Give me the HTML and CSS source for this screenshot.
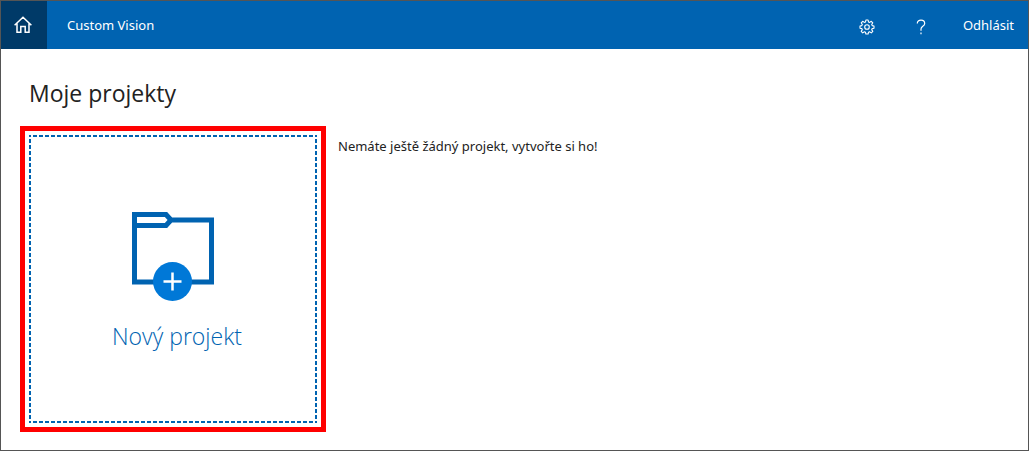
FILE: index.html
```html
<!DOCTYPE html>
<html lang="cs">
<head>
<meta charset="utf-8">
<meta name="viewport" content="width=device-width, initial-scale=1">
<title>Custom Vision</title>
<link rel="stylesheet" href="styles.css">
</head>
<body>
<div class="app">
  <header class="topbar">
    <a class="home" href="#" aria-label="Custom Vision">
      <svg width="18" height="18" viewBox="0 0 18 18" fill="none" stroke="currentColor" stroke-width="1.5"><path d="M.6 9.200 9 1.200l8.400 8M3 7.500V16.200h3.800V10.500h4.400v5.700H15V7.500"/></svg>
    </a>
    <a class="brand" href="#">Custom Vision</a>
    <nav class="actions">
      <div class="icons">
        <button class="icon-button" type="button" aria-label="settings">
          <svg width="16" height="16" viewBox="0 0 16 16" fill="none" stroke="currentColor" stroke-width="1.100" stroke-linejoin="round"><path d="M6.900 1h2.200l.4 1.900 1.100.5 1.700-1.100 1.500 1.500-1.100 1.700.5 1.100 1.800.4v2.200l-1.800.4-.5 1.100 1.100 1.700-1.500 1.500-1.700-1.100-1.100.5L9.100 15H6.900l-.4-1.700-1.100-.5-1.700 1.100-1.500-1.500 1.100-1.700-.5-1.100L1 9.200V7l1.800-.4.5-1.100-1.100-1.700 1.500-1.500 1.700 1.100 1.100-.5z"/><circle cx="8" cy="8" r="2.300"/></svg>
        </button>
        <button class="icon-button" type="button" aria-label="help">
          <svg width="16" height="16" viewBox="0 0 16 16" fill="none" stroke="currentColor" stroke-width="1.200"><path d="M4.300 4.500C4.300 2.300 5.800 1.200 8 1.200s3.700 1.200 3.700 3.200C11.700 7.200 8 7.400 8 10v1.800M8 13.600v1.600"/></svg>
        </button>
      </div>
      <a class="signout" href="#">Odhlásit</a>
    </nav>
  </header>
  <main class="content">
    <h1 class="title">Moje projekty</h1>
    <div class="projects">
      <div class="highlight">
        <button class="new-project" type="button">
          <svg width="82" height="90" viewBox="0 0 82 90" aria-hidden="true">
            <path d="M2.500 2.500H34L39 8H79.500V70H2.500V2.500M2.500 13.500H34L39 8" fill="none" stroke="#0063b1" stroke-width="5"/>
            <path d="M0 0h5v5H0z" fill="#0063b1"/>
            <circle cx="40.500" cy="69.500" r="19.500" fill="#0078d7"/>
            <path d="M31.500 69.500h18M40.500 60.500v18" stroke="#fff" stroke-width="2.500"/>
          </svg>
          <span class="new-label">Nový projekt</span>
        </button>
      </div>
      <p class="empty">Nemáte ještě žádný projekt, vytvořte si ho!</p>
    </div>
  </main>
</div>
</body>
</html>
```
FILE: styles.css
```css
* {
  box-sizing: border-box;
}

body {
  margin: 0;
  background: #fff;
  color: #222;
  font: 13px/20px "Noto Sans", "Open Sans", sans-serif;
}

.app {
  min-height: 100vh;
  border: 1px solid #555;
}

.topbar {
  display: flex;
  align-items: stretch;
  height: 48px;
  background: #0063b1;
  color: #fff;
}

.topbar a {
  color: inherit;
  text-decoration: none;
}

.home {
  display: flex;
  align-items: center;
  justify-content: center;
  width: 46px;
  padding-right: 2px;
  background: #003a68;
}

.brand {
  padding: 14px 20px;
}

.actions {
  display: flex;
  align-items: center;
  gap: 34px;
  margin-left: auto;
  padding-right: 14px;
}

.icons {
  display: flex;
  gap: 38px;
}

.icon-button {
  display: flex;
  padding: 4px 0 0;
  border: 0;
  background: none;
  color: inherit;
}

.content {
  padding: 28px 19px 18px;
}

.title {
  margin: 0 0 17px;
  padding-left: 9px;
  font: 400 23px/32px "Open Sans", "Noto Sans", sans-serif;
}

.projects {
  display: flex;
  align-items: flex-start;
  gap: 12px;
}

.highlight {
  padding: 4px;
  border: 5px solid #f00;
}

/* Dashed frame: 4px dashes with 2px gaps, a dash at every corner */
.new-project {
  display: flex;
  flex-direction: column;
  align-items: center;
  justify-content: center;
  gap: 18px;
  width: 288px;
  height: 288px;
  padding: 6px 0 0;
  border: 0;
  background:
    repeating-linear-gradient(90deg, #0063b1 0 2px, transparent 2px 4px, #0063b1 4px 6px) top / 100% 2px no-repeat,
    repeating-linear-gradient(90deg, #0063b1 0 2px, transparent 2px 4px, #0063b1 4px 6px) bottom / 100% 2px no-repeat,
    repeating-linear-gradient(#0063b1 0 2px, transparent 2px 4px, #0063b1 4px 6px) left / 2px 100% no-repeat,
    repeating-linear-gradient(#0063b1 0 2px, transparent 2px 4px, #0063b1 4px 6px) right / 2px 100% no-repeat;
  color: #0063b1;
  font: 300 23px/32px "Open Sans", "Noto Sans", sans-serif;
}

.new-label {
  padding-left: 8px;
}

.empty {
  margin: 0;
  padding-top: 10px;
}
```
